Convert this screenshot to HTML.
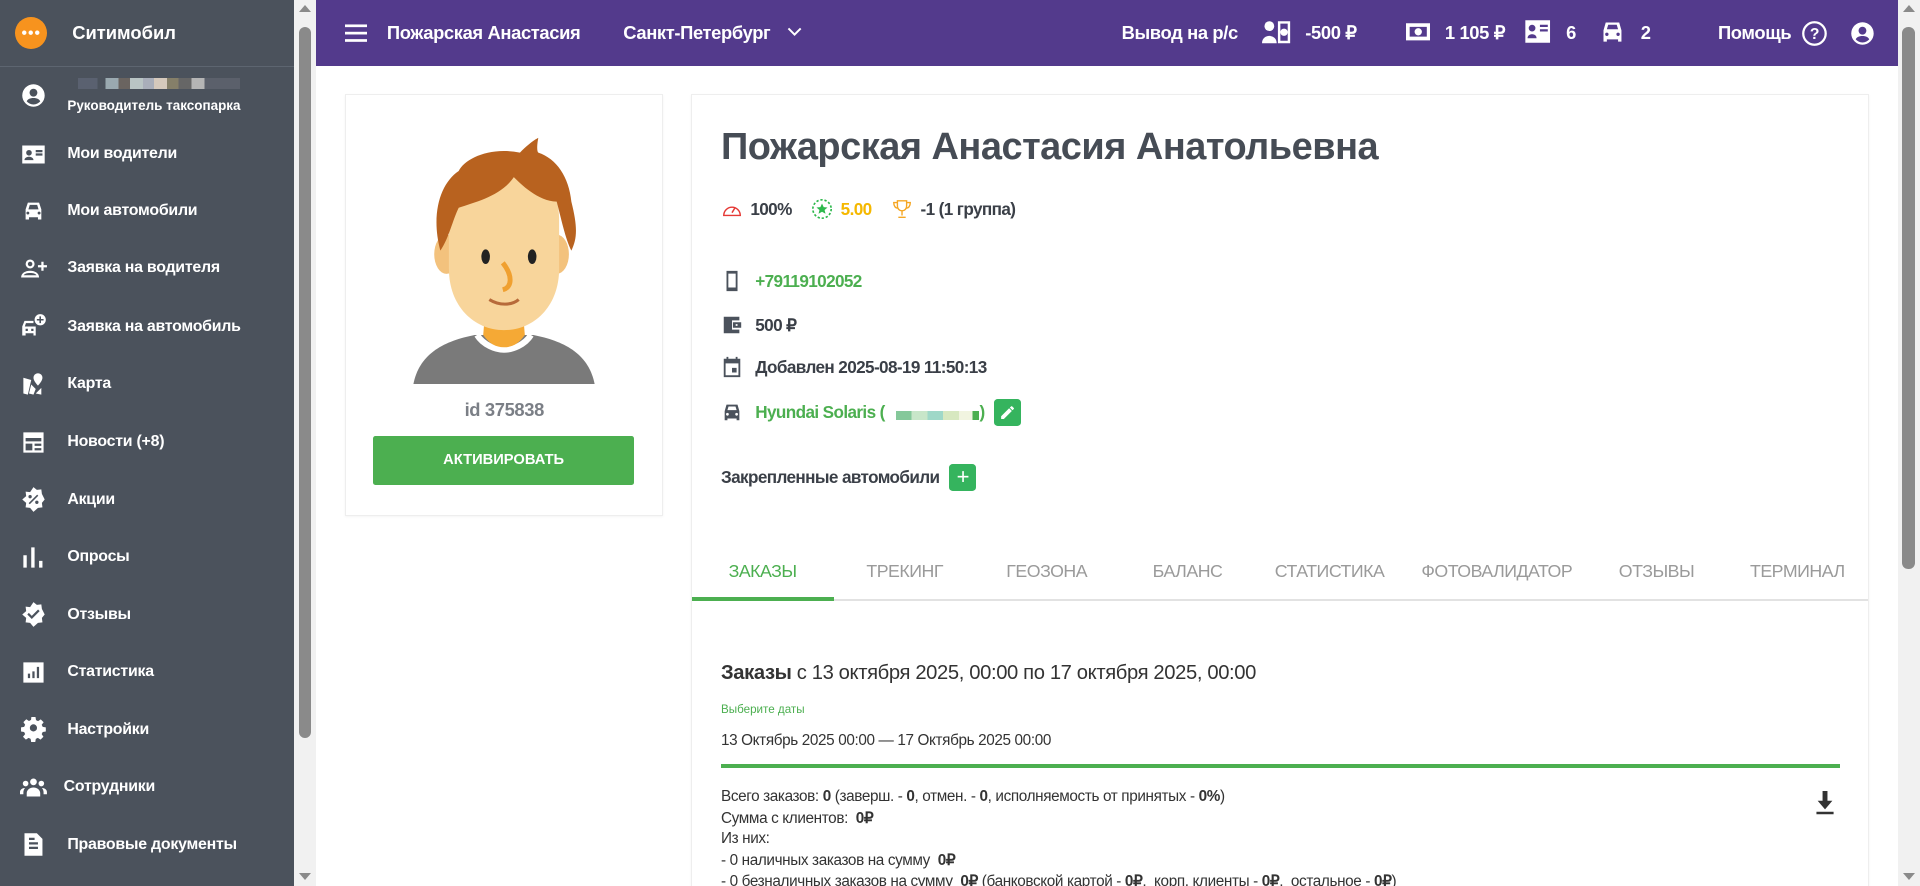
<!DOCTYPE html>
<html><head><meta charset="utf-8">
<style>
html,body{margin:0;padding:0;width:1920px;height:886px;overflow:hidden;background:#fff}
#w{zoom:1.22449;width:1568px;height:724px;position:relative;font-family:"Liberation Sans","Noto Sans CJK SC",sans-serif;overflow:hidden}
.abs{position:absolute}
#sb{left:0;top:0;width:240px;height:724px;background:#4b525c;color:#fff}
#sb .it{position:absolute;left:0;width:240px;height:30px;display:flex;align-items:center}
#sb .it svg{position:absolute;left:16px;width:22px;height:22px;fill:#fff}
#sb .it span{position:absolute;left:55px;font-size:13px;font-weight:bold;letter-spacing:-.2px}
#hd{left:258px;top:0;width:1292px;height:54px;background:#533a8c;color:#fff;font-weight:bold;font-size:15px;letter-spacing:-.3px}
#hd .t{position:absolute;top:18px;white-space:nowrap}
.card{position:absolute;background:#fff;border:1px solid #eee;box-shadow:0 1px 2px rgba(0,0,0,.05)}
.row{position:absolute;left:24px;display:flex;align-items:center;font-size:14px;font-weight:bold;color:#3a3f47;letter-spacing:-.5px}
.row svg{width:18px;height:18px;fill:#4b525c;margin-right:10px}
.tab{position:absolute;top:380px;width:116px;text-align:center;font-size:14.5px;color:#9a9a9a;letter-spacing:-.4px}
.ln{position:absolute;left:24px;font-size:12.5px;color:#333;letter-spacing:-.3px;white-space:nowrap}
</style></head><body><div id="w">
<div id="sb" class="abs">
 <div class="abs" style="left:12px;top:14px;width:26px;height:26px;border-radius:50%;background:#f7931e"></div>
 <div class="abs" style="left:17px;top:24px;width:16px;height:6px;background:radial-gradient(circle,#fff 1.6px,transparent 2px) 0 0/5.3px 6px"></div>
 <div class="abs" style="left:59px;top:18px;font-size:15px;font-weight:bold">Ситимобил</div>
 <div class="abs" style="left:0;top:54px;width:240px;height:1px;background:#5d6570"></div>
 <div class="abs" style="left:64px;top:64px;width:132px;height:9px;background:linear-gradient(90deg,#5a6170 0 12%,#4b525c 12% 17%,#9aa9b0 17% 25%,#6a6460 25% 32%,#b9c4c4 32% 40%,#a9aeba 40% 47%,#d5c9bc 47% 55%,#857f69 55% 62%,#666 62% 70%,#b5b5b5 70% 78%,#5b606b 78%)"></div>
 <div class="abs" style="left:55px;top:80px;font-size:11px;font-weight:bold">Руководитель таксопарка</div>
 <svg class="abs" style="left:16px;top:67px" width="22" height="22" viewBox="0 0 24 24" fill="#fff"><path d="M12 2a10 10 0 100 20 10 10 0 000-20zm0 4a3.5 3.5 0 110 7 3.5 3.5 0 010-7zm0 14a8 8 0 01-6-2.7c.6-1.9 3-3 6-3s5.4 1.1 6 3A8 8 0 0112 20z"/></svg>
 <div class="it" style="top:111px"><svg viewBox="0 0 24 24"><path d="M2 4h20v16H2zM8 8a2.5 2.5 0 100 5 2.5 2.5 0 000-5zm-4 9h8c0-2-2-3-4-3s-4 1-4 3zm10-9h6v2h-6zm0 3h6v2h-6z" fill-rule="evenodd"/></svg><span>Мои водители</span></div>
 <div class="it" style="top:157px"><svg viewBox="0 0 24 24"><path d="M5 11l2-6h10l2 6v9h-3v-2H8v2H5zm2.5 0h9l-1.2-4H8.7zM7 13a1.3 1.3 0 100 2.6A1.3 1.3 0 007 13zm10 0a1.3 1.3 0 100 2.6 1.3 1.3 0 000-2.6z"/></svg><span>Мои автомобили</span></div>
 <div class="it" style="top:204px"><svg viewBox="0 0 24 24"><path d="M9 4a4 4 0 110 8 4 4 0 010-8zm0 2a2 2 0 100 4 2 2 0 000-4zM1 20c0-4 4-6 8-6s8 2 8 6zm2.3-2h11.4c-.7-1.4-3-2-5.7-2s-5 .6-5.7 2zM19 6h2v3h3v2h-3v3h-2v-3h-3V9h3z"/></svg><span>Заявка на водителя</span></div>
 <div class="it" style="top:252px"><svg viewBox="0 0 24 24"><path d="M18 1a5 5 0 110 10 5 5 0 010-10zm-.7 2v2.3H15v1.4h2.3V9h1.4V6.7H21V5.3h-2.3V3zM2 12l2-5h8v2H5.3l-1 3h9.7v8h-2v-2H5v2H2zm3 2v2h2v-2zm5 0v2h2v-2z"/></svg><span>Заявка на автомобиль</span></div>
 <div class="it" style="top:299px"><svg viewBox="0 0 24 24"><path d="M16 2a4 4 0 014 4c0 3-4 7-4 7s-4-4-4-7a4 4 0 014-4zM3 6l7 2-3 13-4-1zm7 6l4 4-2 5-4-1zm9 3v6l-5-1z"/></svg><span>Карта</span></div>
 <div class="it" style="top:346px"><svg viewBox="0 0 24 24"><path d="M3 3h18v18H3zm2 5v3h14V8zm0 5v6h6v-6zm8 0v2h6v-2zm0 4v2h6v-2z"/></svg><span>Новости (+8)</span></div>
 <div class="it" style="top:393px"><svg viewBox="0 0 24 24"><path d="M12 1l3 2.5 4-.5.5 4L22 12l-2.5 3 .5 4-4 .5L12 23l-3-3.5-4-.5.5-4L2 12l3.5-3-.5-4 4 .5zM9 8a1.5 1.5 0 100 3 1.5 1.5 0 000-3zm6 5a1.5 1.5 0 100 3 1.5 1.5 0 000-3zm.3-5.3L7.7 15.3l1 1 7.6-7.6z"/></svg><span>Акции</span></div>
 <div class="it" style="top:440px"><svg viewBox="0 0 24 24"><path d="M3 10h3v11H3zm7-7h3v18h-3zm7 12h3v6h-3z"/></svg><span>Опросы</span></div>
 <div class="it" style="top:487px"><svg viewBox="0 0 24 24"><path d="M12 1l3 2.5 4-.5.5 4L22 12l-2.5 3 .5 4-4 .5L12 23l-3-3.5-4-.5.5-4L2 12l3.5-3-.5-4 4 .5zm-1.5 15l7-7-1.4-1.4-5.6 5.6-2.6-2.6L6.5 12z"/></svg><span>Отзывы</span></div>
 <div class="it" style="top:534px"><svg viewBox="0 0 24 24"><path d="M3 3h18v18H3zm4 10v4h2v-4zm4-2v6h2v-6zm4-4v10h2V7z"/></svg><span>Статистика</span></div>
 <div class="it" style="top:581px"><svg viewBox="0 0 24 24"><path d="M10 2h4l.5 3 2 1 2.6-1.7 2.8 2.8L20 9.5l1 2 3 .5v4l-3 .5-1 2 1.7 2.6-2.8 2.8-2.6-1.7-2 1-.5 3h-4l-.5-3-2-1-2.6 1.7-2.8-2.8L4 18.5l-1-2-3-.5v-4l3-.5 1-2-1.7-2.6L5.1 4.1 7.7 5.8l2-1zM12 9a3.5 3.5 0 100 7 3.5 3.5 0 000-7z" transform="scale(.92) translate(1,-1)"/></svg><span>Настройки</span></div>
 <div class="it" style="top:628px"><svg viewBox="0 0 24 24"><path d="M12 4a3 3 0 110 6 3 3 0 010-6zM5 6a2.5 2.5 0 110 5 2.5 2.5 0 010-5zm14 0a2.5 2.5 0 110 5 2.5 2.5 0 010-5zM6 20v-3c0-3 3-5 6-5s6 2 6 5v3zM0 18v-2c0-2 2-3.5 4.5-3.5-1 1.2-1.5 2.5-1.5 4v1.5zm24 0h-3v-1.5c0-1.5-.5-2.8-1.5-4C22 12.5 24 14 24 16z"/></svg><span style="left:52px">Сотрудники</span></div>
 <div class="it" style="top:675px"><svg viewBox="0 0 24 24"><path d="M4 2h11l5 5v15H4zm4 8v2h8v-2zm0 4v2h8v-2zm0-8v2h5V6z"/></svg><span>Правовые документы</span></div>
</div>
<div class="abs" style="left:240px;top:0;width:18px;height:724px;background:#f1f1f1"></div>
<div class="abs" style="left:244px;top:22px;width:10px;height:581px;background:#8a8a8a;border-radius:5px"></div>
<div class="abs" style="left:244px;top:4px;border:5px solid transparent;border-bottom:6px solid #8a8a8a;border-top:0"></div>
<div class="abs" style="left:244px;top:713px;border:5px solid transparent;border-top:6px solid #8a8a8a;border-bottom:0"></div>
<div class="abs" style="left:1550px;top:0;width:18px;height:724px;background:#f1f1f1"></div>
<div class="abs" style="left:1553px;top:22px;width:11px;height:443px;background:#8a8a8a;border-radius:5px"></div>
<div class="abs" style="left:1554px;top:4px;border:5px solid transparent;border-bottom:6px solid #8a8a8a;border-top:0"></div>
<div class="abs" style="left:1554px;top:713px;border:5px solid transparent;border-top:6px solid #8a8a8a;border-bottom:0"></div>

<div id="hd" class="abs">
 <svg class="abs" style="left:24px;top:18px" width="18" height="18" viewBox="0 0 18 18" fill="#fff"><rect y="2" width="18" height="2.2"/><rect y="8" width="18" height="2.2"/><rect y="14" width="18" height="2.2"/></svg>
 <div class="t" style="left:58px">Пожарская Анастасия</div>
 <div class="t" style="left:251px">Санкт-Петербург</div>
 <svg class="abs" style="left:384px;top:21px" width="14" height="10" viewBox="0 0 14 10"><path d="M2 2l5 5 5-5" stroke="#fff" stroke-width="1.6" fill="none"/></svg>
 <div class="t" style="left:658px">Вывод на р/с</div>
 <svg class="abs" style="left:773px;top:16px" width="24" height="20" viewBox="0 0 24 20" fill="#fff"><circle cx="6" cy="5" r="4"/><path d="M0 19c0-4 3-6 6-6s6 2 6 6z"/><path d="M13 1h10v18H13zm2 2v14h6V3zm3 4a2 2 0 110 6 2 2 0 010-6z" fill-rule="evenodd"/></svg>
 <div class="t" style="left:808px">-500 ₽</div>
 <svg class="abs" style="left:890px;top:18px" width="20" height="16" viewBox="0 0 20 16" fill="#fff"><path d="M0 1h20v14H0zm3 3v8h14V4zm7 1a3 3 0 110 6 3 3 0 010-6z" fill-rule="evenodd"/></svg>
 <div class="t" style="left:922px">1 105 ₽</div>
 <svg class="abs" style="left:986px;top:15px" width="24" height="22" viewBox="0 0 24 24" fill="#fff"><path d="M1 2h22v20H1zm6 4a3 3 0 100 6 3 3 0 000-6zm-4 12h8c0-2.5-2-3.5-4-3.5S3 15.5 3 18zm11-12h7v2h-7zm0 4h7v2h-7z" fill-rule="evenodd"/></svg>
 <div class="t" style="left:1021px">6</div>
 <svg class="abs" style="left:1048px;top:15px" width="22" height="22" viewBox="0 0 24 24" fill="#fff"><path d="M4 11l2-7h12l2 7v10h-3v-2H7v2H4zm3-1h10l-1.2-4H8.2zM7 13a1.5 1.5 0 100 3 1.5 1.5 0 000-3zm10 0a1.5 1.5 0 100 3 1.5 1.5 0 000-3z"/></svg>
 <div class="t" style="left:1082px">2</div>
 <div class="t" style="left:1145px">Помощь</div>
 <svg class="abs" style="left:1213px;top:16px" width="22" height="22" viewBox="0 0 24 24"><circle cx="12" cy="12" r="10" stroke="#fff" stroke-width="2" fill="none"/><text x="12" y="17" text-anchor="middle" font-size="14" fill="#fff" font-family="Liberation Sans">?</text></svg>
 <svg class="abs" style="left:1252px;top:16px" width="22" height="22" viewBox="0 0 24 24" fill="#fff"><path d="M12 2a10 10 0 100 20 10 10 0 000-20zm0 4a3.5 3.5 0 110 7 3.5 3.5 0 010-7zm0 14a8 8 0 01-6-2.7c.6-1.9 3-3 6-3s5.4 1.1 6 3A8 8 0 0112 20z"/></svg>
</div>

<div class="card" style="left:282px;top:77px;width:258px;height:343px">
 <svg class="abs" style="left:22px;top:22px" width="214" height="214" viewBox="0 0 214 214">
  <path d="M33 214c5-25 25-35 50-40h48c25 5 45 15 50 40z" fill="#7a7a7a"/>
  <path d="M85 174c5 8 15 12 22 12s17-4 22-12" fill="none" stroke="#fff" stroke-width="5"/>
  <path d="M92 150h30l2 24c-5 7-10 10-17 10s-12-3-17-10z" fill="#f5a935"/>
  <ellipse cx="60" cy="108" rx="10" ry="16" fill="#f3c27d"/>
  <ellipse cx="150" cy="108" rx="10" ry="16" fill="#f3c27d"/>
  <path d="M62 80c0-30 20-45 45-45s45 15 45 45v40c0 30-20 50-45 50s-45-20-45-50z" fill="#f8d59b"/>
  <path d="M55 105c-8-30 0-55 15-65 5-10 25-20 50-15 10-10 15-12 15-12s-2 10 0 12c15 5 25 20 27 40 5 20 5 30 0 40-5-10-8-25-12-40-15 0-30-15-35-20-10 15-30 20-45 25-5 10-8 25-15 35z" fill="#b8621f"/>
  <ellipse cx="92" cy="110" rx="3.5" ry="6" fill="#222"/>
  <ellipse cx="130" cy="110" rx="3.5" ry="6" fill="#222"/>
  <path d="M106 115c8 10 8 20 0 22" fill="none" stroke="#f0a030" stroke-width="4"/>
  <path d="M95 145c8 5 18 5 24 0" fill="none" stroke="#b76a3a" stroke-width="2.5"/>
 </svg>
 <div class="abs" style="left:0;width:258px;top:248px;text-align:center;color:#7b7f86;font-weight:bold;font-size:15px;letter-spacing:-.3px">id 375838</div>
 <div class="abs" style="left:22px;top:278px;width:213px;height:40px;background:#4caf50;border-radius:2px;color:#fff;font-weight:bold;font-size:12px;text-align:center;line-height:40px">АКТИВИРОВАТЬ</div>
</div>

<div class="card" style="left:564px;top:77px;width:961px;height:660px">
 <div class="abs" style="left:24px;top:25px;font-size:31px;font-weight:bold;color:#464c55;letter-spacing:-.4px;white-space:nowrap">Пожарская Анастасия Анатольевна</div>
 <div class="row" style="top:84px">
  <svg viewBox="0 0 24 24" style="fill:none;stroke:#e53935;stroke-width:1.6;margin-right:6px"><path d="M3 19a9 9 0 1118 0zM12 16l3-5"/></svg><span>100%</span>
  <svg viewBox="0 0 24 24" style="margin-left:16px;margin-right:6px;fill:none;stroke:#2db84c;stroke-width:1.8;stroke-dasharray:2.5 2"><circle cx="12" cy="12" r="10"/><path d="M12 6l1.8 4 4.2.3-3.2 2.8 1 4.1L12 15l-3.8 2.2 1-4.1L6 10.3l4.2-.3z" fill="#2db84c" stroke="none"/></svg><span style="color:#f5b800">5.00</span>
  <svg viewBox="0 0 24 24" style="margin-left:16px;margin-right:6px;fill:none;stroke:#f5a623;stroke-width:1.5"><path d="M7 3h10v6a5 5 0 01-10 0zM7 5H3c0 4 2 6 4 6M17 5h4c0 4-2 6-4 6M12 14v5M8 21h8"/></svg><span>-1 (1 группа)</span>
 </div>
 <div class="row" style="top:143px"><svg viewBox="0 0 24 24"><path d="M6 1h12v22H6zm2 3v15h8V4z" fill-rule="evenodd"/></svg><span style="color:#4caf50">+79119102052</span></div>
 <div class="row" style="top:179px"><svg viewBox="0 0 24 24"><path d="M3 3h17v4h-8v10h8v4H3zm10 6h9v6h-9zm3 2v2h2v-2z"/></svg><span>500 ₽</span></div>
 <div class="row" style="top:213px"><svg viewBox="0 0 24 24"><path d="M6 1h2v2h8V1h2v2h3v20H3V3h3zM5 8v13h14V8zm7 5h5v5h-5z"/></svg><span>Добавлен 2025-08-19 11:50:13</span></div>
 <div class="row" style="top:248px"><svg viewBox="0 0 24 24"><path d="M4 11l2-7h12l2 7v10h-3v-2H7v2H4zm3-1h10l-1.2-4H8.2zM7 13a1.5 1.5 0 100 3 1.5 1.5 0 000-3zm10 0a1.5 1.5 0 100 3 1.5 1.5 0 000-3z"/></svg><span style="color:#4caf50">Hyundai Solaris (&nbsp;</span><span style="display:inline-block;width:74px;height:8px;margin-top:5px;background:linear-gradient(90deg,#fff 0 8%,#85c89a 8% 25%,#c8e6c9 25% 43%,#9fd8c8 43% 60%,#d7e8c0 60% 78%,#f1f4e0 78% 93%,#4caf50 93%)"></span><span style="color:#4caf50">)</span>
  <span style="display:inline-block;width:22px;height:22px;background:#35b45e;border-radius:3px;margin-left:8px;position:relative"><svg viewBox="0 0 24 24" style="position:absolute;left:4px;top:4px;width:14px;height:14px;fill:#fff;margin:0"><path d="M3 17.2V21h3.8L18 9.8 14.2 6zM20.7 7a1 1 0 000-1.4l-2.3-2.3a1 1 0 00-1.4 0l-1.8 1.8 3.7 3.7z"/></svg></span></div>
 <div class="row" style="top:301px"><span>Закрепленные автомобили</span><span style="display:inline-block;width:22px;height:22px;background:#35b45e;border-radius:3px;margin-left:8px;color:#fff;text-align:center;line-height:21px;font-size:18px;font-weight:normal">+</span></div>

 <div class="tab" style="left:0;color:#4caf50">ЗАКАЗЫ</div>
 <div class="tab" style="left:116px">ТРЕКИНГ</div>
 <div class="tab" style="left:232px">ГЕОЗОНА</div>
 <div class="tab" style="left:347px">БАЛАНС</div>
 <div class="tab" style="left:463px">СТАТИСТИКА</div>
 <div class="tab" style="left:596px">ФОТОВАЛИДАТОР</div>
 <div class="tab" style="left:730px">ОТЗЫВЫ</div>
 <div class="tab" style="left:845px">ТЕРМИНАЛ</div>
 <div class="abs" style="left:0;top:411px;width:961px;height:2px;background:#e2e2e2"></div>
 <div class="abs" style="left:0;top:410px;width:116px;height:3px;background:#4caf50"></div>

 <div class="abs" style="left:24px;top:463px;font-size:16.5px;color:#333;letter-spacing:-.3px;white-space:nowrap"><b>Заказы</b> с 13 октября 2025, 00:00 по 17 октября 2025, 00:00</div>
 <div class="abs" style="left:24px;top:496px;font-size:9.5px;color:#4caf50">Выберите даты</div>
 <div class="abs" style="left:24px;top:520px;font-size:12.5px;color:#333;letter-spacing:-.3px">13 Октябрь 2025 00:00 — 17 Октябрь 2025 00:00</div>
 <div class="abs" style="left:24px;top:546px;width:914px;height:3px;background:#4caf50"></div>
 <div class="ln" style="top:566px">Всего заказов: <b>0</b> (заверш. - <b>0</b>, отмен. - <b>0</b>, исполняемость от принятых - <b>0%</b>)</div>
 <div class="ln" style="top:583px">Сумма с клиентов: &nbsp;<b>0₽</b></div>
 <div class="ln" style="top:600px">Из них:</div>
 <div class="ln" style="top:617px">- 0 наличных заказов на сумму &nbsp;<b>0₽</b></div>
 <div class="ln" style="top:634px">- 0 безналичных заказов на сумму &nbsp;<b>0₽</b> (банковской картой - <b>0₽</b>, &nbsp;корп. клиенты - <b>0₽</b>, &nbsp;остальное - <b>0₽</b>)</div>
 <svg class="abs" style="left:917px;top:568px" width="18" height="20" viewBox="0 0 18 20" fill="#333"><path d="M7 0h4v8h4l-6 7-6-7h4zM2 17h14v2H2z"/></svg>
</div>
</div></body></html>
